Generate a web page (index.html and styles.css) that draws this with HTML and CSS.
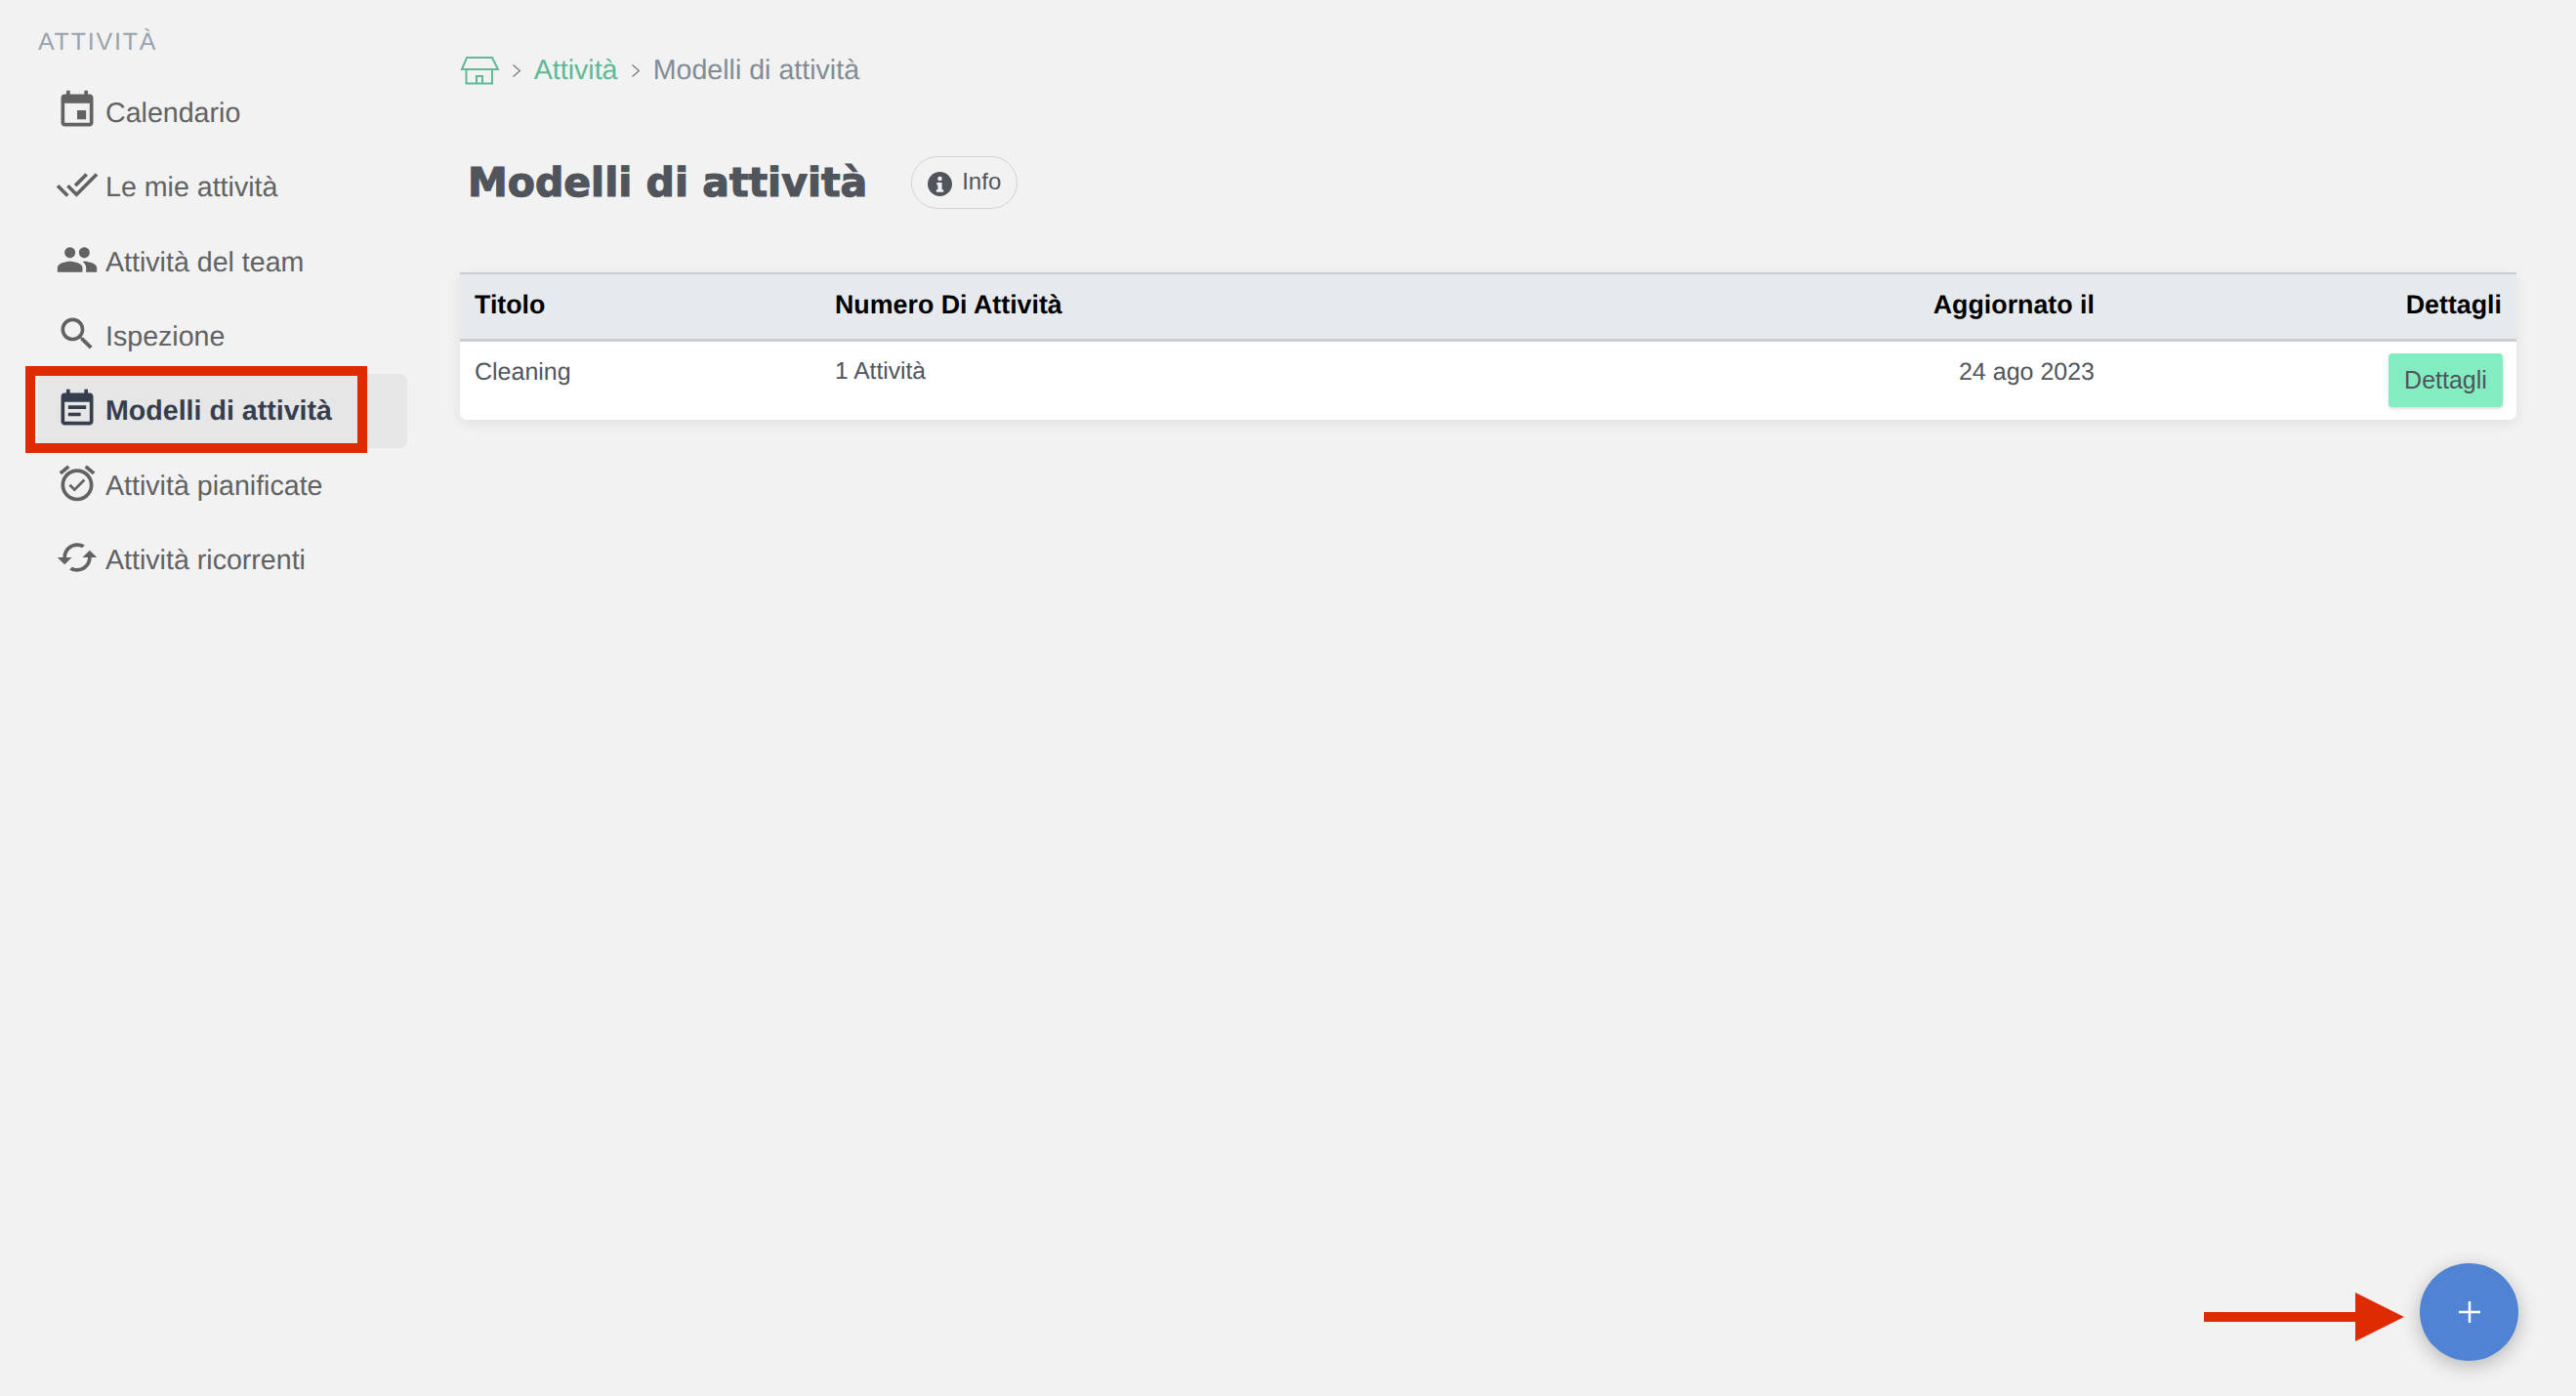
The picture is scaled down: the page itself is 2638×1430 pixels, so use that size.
FILE: index.html
```html
<!DOCTYPE html>
<html lang="it">
<head>
<meta charset="utf-8">
<title>Modelli di attività</title>
<link rel="stylesheet" href="styles.css">
</head>
<body>
<aside class="sidebar">
  <div class="side-title">ATTIVITÀ</div>
  <nav class="nav">
    <a class="nav-item"><svg class="nav-icon" viewBox="0 0 24 24"><path d="M17 12h-5v5h5v-5zM16 1v2H8V1H6v2H5c-1.11 0-1.99.9-1.99 2L3 19c0 1.1.89 2 2 2h14c1.1 0 2-.9 2-2V5c0-1.1-.9-2-2-2h-1V1h-2zm3 18H5V8h14v11z"/></svg><span class="nav-label">Calendario</span></a>
    <a class="nav-item"><svg class="nav-icon" viewBox="0 0 24 24"><path d="M18 7l-1.41-1.41-6.34 6.34 1.41 1.41L18 7zm4.24-1.41L11.66 16.17 7.48 12l-1.41 1.41L11.66 19l12-12-1.42-1.41zM.41 13.41L6 19l1.41-1.41L1.83 12 .41 13.41z"/></svg><span class="nav-label">Le mie attività</span></a>
    <a class="nav-item"><svg class="nav-icon" viewBox="0 0 24 24"><path d="M16 11c1.66 0 2.99-1.34 2.99-3S17.66 5 16 5c-1.66 0-3 1.34-3 3s1.34 3 3 3zm-8 0c1.66 0 2.99-1.34 2.99-3S9.66 5 8 5C6.34 5 5 6.34 5 8s1.34 3 3 3zm0 2c-2.33 0-7 1.17-7 3.5V19h14v-2.5c0-2.33-4.67-3.5-7-3.5zm8 0c-.29 0-.62.02-.97.05 1.16.84 1.97 1.97 1.97 3.45V19h6v-2.5c0-2.33-4.67-3.5-7-3.5z"/></svg><span class="nav-label">Attività del team</span></a>
    <a class="nav-item"><svg class="nav-icon" viewBox="0 0 24 24"><path d="M15.5 14h-.79l-.28-.27C15.41 12.59 16 11.11 16 9.5 16 5.91 13.09 3 9.5 3S3 5.91 3 9.5 5.91 16 9.5 16c1.61 0 3.09-.59 4.23-1.57l.27.28v.79l5 4.99L20.49 19l-4.99-5zm-6 0C7.01 14 5 11.99 5 9.5S7.01 5 9.5 5 14 7.01 14 9.5 11.99 14 9.5 14z"/></svg><span class="nav-label">Ispezione</span></a>
    <a class="nav-item is-active"><svg class="nav-icon" viewBox="0 0 24 24"><path d="M17 10H7v2h10v-2zm2-7h-1V1h-2v2H8V1H6v2H5c-1.11 0-1.99.9-1.99 2L3 19c0 1.1.89 2 2 2h14c1.1 0 2-.9 2-2V5c0-1.1-.9-2-2-2zm0 16H5V8h14v11zm-5-5H7v2h7v-2z"/></svg><span class="nav-label">Modelli di attività</span></a>
    <a class="nav-item"><svg class="nav-icon" viewBox="0 0 24 24"><path d="M22 5.72l-4.6-3.86-1.29 1.53 4.6 3.86L22 5.72zM7.88 3.39L6.6 1.86 2 5.71l1.29 1.53 4.59-3.85zM12 4c-4.97 0-9 4.03-9 9s4.02 9 9 9c4.97 0 9-4.03 9-9s-4.03-9-9-9zm0 16c-3.86 0-7-3.14-7-7s3.14-7 7-7 7 3.14 7 7-3.14 7-7 7zm-1.46-5.47L8.41 12.4l-1.06 1.06 3.18 3.18 6-6-1.06-1.06-4.93 4.95z"/></svg><span class="nav-label">Attività pianificate</span></a>
    <a class="nav-item"><svg class="nav-icon" viewBox="0 0 24 24"><path d="M19 8l-4 4h3c0 3.31-2.69 6-6 6-1.01 0-1.97-.25-2.8-.7l-1.46 1.46C8.97 19.54 10.43 20 12 20c4.42 0 8-3.58 8-8h3l-4-4zM6 12c0-3.31 2.69-6 6-6 1.01 0 1.97.25 2.8.7l1.46-1.46C15.03 4.46 13.57 4 12 4c-4.42 0-8 3.58-8 8H1l4 4 4-4H6z"/></svg><span class="nav-label">Attività ricorrenti</span></a>
  </nav>
</aside>
<main class="main">
  <div class="crumbs">
    <svg class="home" viewBox="0 0 41 30"><path d="M7 2h26l6 12H2zM6.500 14v14.500H33V14M17 28.500V21h6v7.500"/></svg>
    <svg class="chev" viewBox="0 0 8 13"><path d="M.5.5l7 6-7 6"/></svg>
    <a class="crumb-link">Attività</a>
    <svg class="chev" viewBox="0 0 8 13"><path d="M.5.5l7 6-7 6"/></svg>
    <span class="crumb-now">Modelli di attività</span>
  </div>
  <div class="head">
    <h1 class="title">Modelli di attività</h1>
    <button class="pill"><svg class="info" viewBox="0 0 24 24"><path fill-rule="evenodd" d="M12 0a12 12 0 1 0 0 24 12 12 0 0 0 0-24zm0 4.500a2.200 2.200 0 1 1 0 4.400 2.200 2.200 0 0 1 0-4.400zM9 10.500h5v7h1.500v2.500h-7v-2.500H10v-4.500H9z"/></svg><span class="pill-text">Info</span></button>
  </div>
  <div class="card">
    <table class="table">
      <colgroup><col class="c1"><col class="c2"><col class="c3"><col class="c4"></colgroup>
      <thead><tr><th>Titolo</th><th>Numero Di Attività</th><th class="r">Aggiornato il</th><th class="r">Dettagli</th></tr></thead>
      <tbody><tr><td>Cleaning</td><td class="count">1 Attività</td><td class="r">24 ago 2023</td><td class="r btn-cell"><button class="details">Dettagli</button></td></tr></tbody>
    </table>
  </div>
</main>
<div class="mark"></div>
<svg class="arrow" viewBox="0 0 205 50"><path d="M0 20h155V0l50 25-50 25V30H0z"/></svg>
<button class="fab"><svg viewBox="0 0 22 22"><path d="M11 0v22M0 11h22"/></svg></button>
</body>
</html>
```
FILE: styles.css
```css
* { box-sizing: border-box; }
html, body { margin: 0; height: 100%; }
body {
  display: flex;
  height: 1430px;
  overflow: hidden;
  background: #f2f2f2;
  font-family: "Liberation Sans", Arial, sans-serif;
  color: #50555c;
  text-rendering: geometricPrecision;
}
.sidebar { width: 471px; flex: none; padding: 28px 54px 0 39px; }
.side-title {
  font-size: 25px;
  line-height: 30px;
  letter-spacing: 1.8px;
  color: #99a3ad;
  margin-bottom: 19.4px;
}
.nav { display: flex; flex-direction: column; }
.nav-item {
  display: flex;
  align-items: center;
  height: 76.4px;
  padding-left: 17.5px;
  gap: 7.5px;
  font-size: 28.6px;
  color: #616263;
  border-radius: 8px;
}
.nav-label { margin-top: 1.5px; }
.nav-icon { width: 44px; height: 44px; flex: none; fill: currentColor; margin-bottom: 5px; }
.is-active { background: #e6e6e6; color: #363e4e; font-weight: 700; }
.main { width: 2106px; flex: none; padding-top: 52px; display: flex; flex-direction: column; }
.crumbs { display: flex; align-items: center; height: 40px; gap: 14.1px; font-size: 28.6px; line-height: 40px; }
.home { width: 41px; height: 30px; flex: none; fill: none; stroke: #5fb995; stroke-width: 2; margin-right: -1.500px; }
.chev { width: 8px; height: 13px; flex: none; fill: none; stroke: #6c6f70; stroke-width: 1.1; }
.crumb-link { color: #5fb995; }
.crumb-now { color: #828c96; }
.head { display: flex; align-items: center; height: 54px; margin-top: 68px; padding-left: 8px; gap: 45px; }
.title {
  margin: 0;
  font-family: "DejaVu Sans", "Liberation Sans", sans-serif;
  font-size: 41px;
  font-weight: 700;
  line-height: 54px;
  color: #50555c;
  -webkit-text-stroke: 1.2px #50555c;
}
.pill {
  display: flex;
  align-items: center;
  gap: 10px;
  width: 109px;
  height: 54px;
  padding: 0 0 0 16px;
  border: 1.5px solid #d3d3d3;
  border-radius: 27px;
  background: transparent;
  font: 24px "Liberation Sans", Arial, sans-serif;
  color: #50555c;
}
.pill-text { margin-bottom: 2px; }
.info { width: 25px; height: 25px; fill: #50555c; flex: none; margin-top: 3px; }
.card {
  margin-top: 65px;
  background: #fff;
  border-radius: 0 0 7px 7px;
  box-shadow: 0 4px 14px rgba(0, 0, 0, 0.07);
  overflow: hidden;
}
.table { width: 2106px; table-layout: fixed; border-collapse: separate; border-spacing: 0; }
.c1 { width: 369px; }
.c2 { width: 800px; }
.c3 { width: 520px; }
.c4 { width: 417px; }
th {
  height: 71px;
  padding: 0 15px 3px;
  background: #e7eaed;
  border-top: 2px solid #c9ced4;
  border-bottom: 3px solid #c9ced4;
  font-size: 26.8px;
  font-weight: 700;
  color: #000;
  text-align: left;
}
td {
  padding: 13px 15px 13px;
  font-size: 25px;
  line-height: 36px;
  height: 80px;
  vertical-align: top;
  color: #50555c;
}
.count { font-size: 24.6px; }
th.r, td.r { text-align: right; }
td.btn-cell { padding-top: 12px; }
.details {
  display: inline-block;
  width: 117px;
  height: 55px;
  padding: 0;
  border: 0;
  border-radius: 4px;
  background: #84ecc1;
  box-shadow: 0 2px 3px rgba(0, 0, 0, 0.12);
  font: 25px "Liberation Sans", Arial, sans-serif;
  color: #50555c;
  vertical-align: top;
  margin-right: -1px;
}
.mark {
  position: absolute;
  left: 26px;
  top: 375px;
  width: 350px;
  height: 89px;
  border: 10px solid #de2b02;
}
.arrow { position: absolute; left: 2257px; top: 1324px; width: 205px; height: 50px; fill: #de2b02; }
.fab {
  position: absolute;
  left: 2478px;
  top: 1294px;
  width: 101px;
  height: 100px;
  padding: 0;
  border: 0;
  border-radius: 50%;
  background: #5183d4;
  box-shadow: 0 5px 20px rgba(0, 0, 0, 0.25);
  display: flex;
  align-items: center;
  justify-content: center;
}
.fab svg { width: 22px; height: 22px; fill: none; stroke: #fff; stroke-width: 2.5; }
```
